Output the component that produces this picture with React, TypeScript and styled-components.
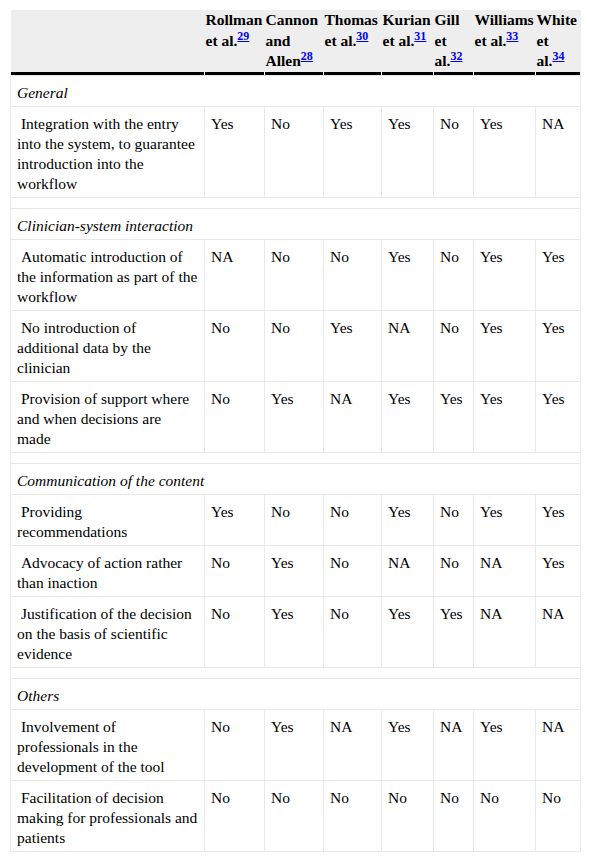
import React from 'react'
import styled, { createGlobalStyle } from 'styled-components'

const GlobalStyle = createGlobalStyle`
  html, body {
    margin: 0;
    padding: 0;
    background: #fff;
  }
  body {
    font-family: "Liberation Serif", "Times New Roman", serif;
    font-size: 15.5px;
    color: #000;
  }
`

type Answer = 'Yes' | 'No' | 'NA'

type Criterion = { label: string, answers: Answer[] }

type Section = { title: string, rows: Criterion[] }

const STUDIES = [
  { lead: 'Rollman', rest: 'et al.', ref: 29 },
  { lead: 'Cannon', rest: 'and Allen', ref: 28 },
  { lead: 'Thomas', rest: 'et al.', ref: 30 },
  { lead: 'Kurian', rest: 'et al.', ref: 31 },
  { lead: 'Gill', rest: 'et al.', ref: 32 },
  { lead: 'Williams', rest: 'et al.', ref: 33 },
  { lead: 'White', rest: 'et al.', ref: 34 },
]

const COLUMN_WIDTHS = [194, 60, 59, 58, 52, 40, 62, 45]

// labels keep the line break the source table shows
const SECTIONS: Section[] = [
  {
    title: 'General',
    rows: [
      {
        label: 'Integration with the entry into the system, to guarantee introduction into the workflow',
        answers: ['Yes', 'No', 'Yes', 'Yes', 'No', 'Yes', 'NA'],
      },
    ],
  },
  {
    title: 'Clinician-system interaction',
    rows: [
      {
        label: 'Automatic introduction of the information as part of the workflow',
        answers: ['NA', 'No', 'No', 'Yes', 'No', 'Yes', 'Yes'],
      },
      {
        label: 'No introduction of additional data by the clinician',
        answers: ['No', 'No', 'Yes', 'NA', 'No', 'Yes', 'Yes'],
      },
      {
        label: 'Provision of support where and when decisions are made',
        answers: ['No', 'Yes', 'NA', 'Yes', 'Yes', 'Yes', 'Yes'],
      },
    ],
  },
  {
    title: 'Communication of the content',
    rows: [
      {
        label: 'Providing\nrecommendations',
        answers: ['Yes', 'No', 'No', 'Yes', 'No', 'Yes', 'Yes'],
      },
      {
        label: 'Advocacy of action rather than inaction',
        answers: ['No', 'Yes', 'No', 'NA', 'No', 'NA', 'Yes'],
      },
      {
        label: 'Justification of the decision on the basis of scientific evidence',
        answers: ['No', 'Yes', 'No', 'Yes', 'Yes', 'NA', 'NA'],
      },
    ],
  },
  {
    title: 'Others',
    rows: [
      {
        label: 'Involvement of professionals in the development of the tool',
        answers: ['No', 'Yes', 'NA', 'Yes', 'NA', 'Yes', 'NA'],
      },
      {
        label: 'Facilitation of decision making for professionals and patients',
        answers: ['No', 'No', 'No', 'No', 'No', 'No', 'No'],
      },
    ],
  },
]

export default function App() {
  return (
    <>
      <GlobalStyle />
      <Page>
        <Table>
          <colgroup>
            {COLUMN_WIDTHS.map((w, i) => (
              <col key={i} style={{ width: w }} />
            ))}
          </colgroup>
          <thead>
            <tr>
              <HeadCell />
              {STUDIES.map(s => (
                <HeadCell key={s.ref}>
                  {s.lead} {s.rest}
                  <Ref>
                    <a href={`#bib${s.ref}`}>{s.ref}</a>
                  </Ref>
                </HeadCell>
              ))}
            </tr>
          </thead>
          <tbody>
            {SECTIONS.map((section, si) => (
              <React.Fragment key={section.title}>
                {si > 0 && (
                  <tr>
                    <Cell colSpan={8} />
                  </tr>
                )}
                <tr>
                  <SectionCell colSpan={8}>{section.title}</SectionCell>
                </tr>
                {section.rows.map(row => (
                  <tr key={row.label}>
                    <LabelCell>{'\u00a0' + row.label}</LabelCell>
                    {row.answers.map((a, i) => (
                      <Cell key={i}>{a}</Cell>
                    ))}
                  </tr>
                ))}
              </React.Fragment>
            ))}
          </tbody>
        </Table>
      </Page>
    </>
  )
}

const Page = styled.div`
  padding: 10px 10px 0 10px;
`

const Table = styled.table`
  border-collapse: collapse;
  table-layout: fixed;
  width: 570px;
`

const HeadCell = styled.th`
  vertical-align: top;
  text-align: left;
  font-weight: bold;
  line-height: 20.5px;
  padding: 0 1px 3px 1px;
  background:
    linear-gradient(#000, #000) left bottom / calc(100% - 1px) 3px no-repeat,
    linear-gradient(#fff, #fff) left bottom / 100% 3px no-repeat,
    #eeeeee;
`

const Ref = styled.sup`
  font-size: 12px;
  line-height: 0;
  vertical-align: 6px;

  a {
    color: #0000ee;
    text-decoration: underline;
  }
`

const Cell = styled.td`
  vertical-align: top;
  text-align: left;
  line-height: 20px;
  padding: 7px 6px 3px 6px;
  border: 1px solid #e9e9e9;
`

const LabelCell = styled(Cell)`
  white-space: pre-line;
`

const SectionCell = styled(Cell)`
  font-style: italic;
`
